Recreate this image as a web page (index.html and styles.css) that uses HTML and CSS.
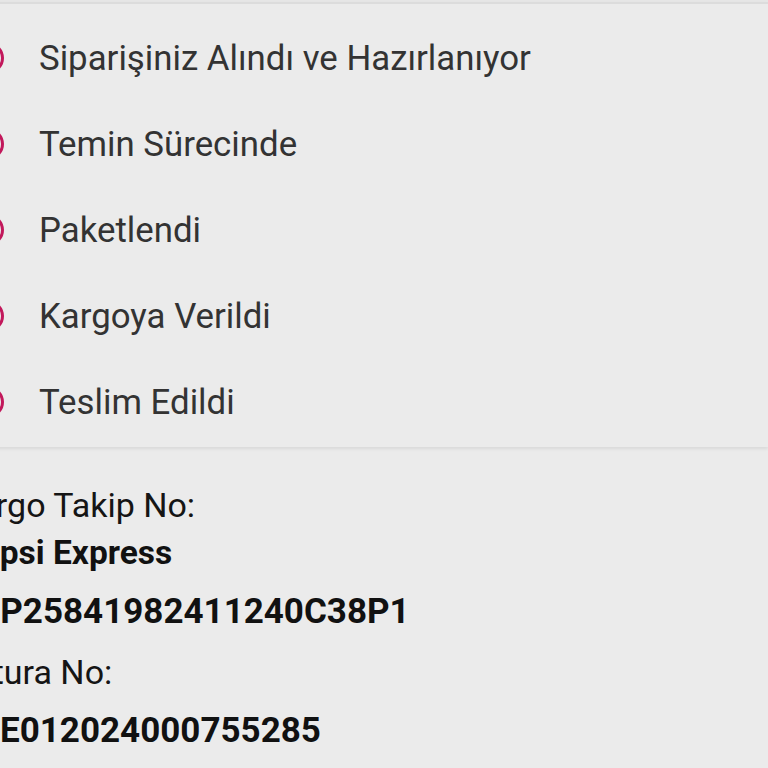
FILE: index.html
```html
<!DOCTYPE html>
<html lang="tr">
<head>
    <meta charset="UTF-8">
    <meta name="viewport" content="width=device-width, initial-scale=1.0">
    <title>Sipariş Takibi</title>
    <link rel="stylesheet" href="styles.css">
</head>
<body>
    <div class="page">
        <div class="status-panel">
            <ul class="status-list">
                <li class="status-item"><span class="dot"></span>Siparişiniz Alındı ve Hazırlanıyor</li>
                <li class="status-item"><span class="dot"></span>Temin Sürecinde</li>
                <li class="status-item"><span class="dot"></span>Paketlendi</li>
                <li class="status-item"><span class="dot"></span>Kargoya Verildi</li>
                <li class="status-item"><span class="dot"></span>Teslim Edildi</li>
            </ul>
        </div>

        <div class="shipping-info">
            <div class="label">Kargo Takip No:</div>
            <div class="value carrier">Hepsi Express</div>
            <div class="value code">HJP25841982411240C38P1</div>
            <div class="label invoice">Fatura No:</div>
            <div class="value code invoice-no">E012024000755285</div>
        </div>
    </div>
</body>
</html>
```

FILE: styles.css
```css
body {
    margin: 0;
    padding: 0;
    background-color: #ebebeb;
    font-family: Roboto, 'Noto Sans', sans-serif;
    overflow: hidden;
}

.page {
    margin-left: -40px;
    border-top: 2px solid #e6e6e6;
}

.status-panel {
    background: #ebebeb;
    border-top: 2px solid #dcdcdc;
    padding: 11px 0 2px;
    box-shadow: 0 2px 3px rgba(0, 0, 0, 0.08);
}

.status-list {
    list-style: none;
    margin: 0;
    padding: 0;
}

.status-item {
    display: flex;
    align-items: center;
    height: 86px;
    font-size: 34.8px;
    color: #333;
    padding-left: 12px;
}

.dot {
    width: 26px;
    height: 26px;
    border: 3px solid #c2185b;
    border-radius: 50%;
    margin-right: 35px;
    flex-shrink: 0;
}

.shipping-info {
    padding: 34px 0 0 0;
    margin-left: -4px;
    font-size: 34px;
    color: #151515;
}

.label {
    line-height: 48px;
}

.value {
    line-height: 48px;
    font-size: 35px;
    font-weight: 700;
    color: #111;
}

.carrier {
    font-size: 33.5px;
    padding-left: 2px;
}

.code {
    margin-top: 11px;
}

.invoice {
    margin-top: 12px;
}

.invoice-no {
    padding-left: 44px;
}
```
